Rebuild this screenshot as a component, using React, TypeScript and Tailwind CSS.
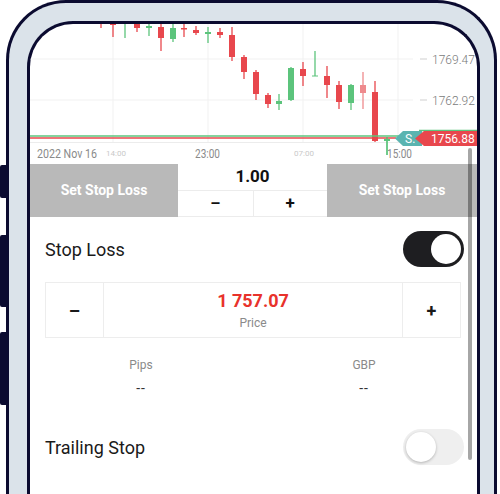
const RED = "#e8474d"
const GREEN = "#5cc47c"
const LIGHT_RED = "#ee8a8d"

// [x, bodyTop, bodyBottom, wickTop, wickBottom, colour] in page pixels
type Candle = [number, number, number, number, number, string]

const candles: Candle[] = [
  [101, 22, 24, 22, 28, RED],
  [113, 22, 25, 22, 37, RED],
  [125, 22, 24, 22, 38, GREEN],
  [137, 22, 28, 22, 32, RED],
  [149, 26, 28, 24, 36, GREEN],
  [161, 27, 38, 24, 51, RED],
  [173, 28, 39, 24, 42, GREEN],
  [184, 28, 29.5, 24, 37, RED],
  [196, 30, 33, 26, 35, RED],
  [208, 32, 34, 27, 43, GREEN],
  [220, 32, 35, 28, 38, RED],
  [232, 35, 57, 27, 61, RED],
  [244, 57, 72, 55, 79, RED],
  [256, 72, 94, 70, 100, RED],
  [268, 95, 104, 93, 108, RED],
  [279, 101, 104, 94, 110, GREEN],
  [291, 68, 100, 67, 101, GREEN],
  [303, 69, 76, 62, 86, RED],
  [315, 75.5, 76.5, 51, 76, GREEN],
  [327, 76, 85, 66, 98, RED],
  [339, 85, 102, 81, 109, RED],
  [351, 85, 103, 84, 110, GREEN],
  [363, 85, 93, 72, 109, LIGHT_RED],
  [375, 92, 141, 81, 142, RED],
  [387, 139, 141, 137, 155, GREEN],
]

function Chart() {
  const ox = 30
  const oy = 24
  return (
    <svg width="447" height="140" className="block" fontFamily="Roboto, sans-serif">
      {[113, 208, 303, 398].map((x) => (
        <line key={x} x1={x - ox} y1="0" x2={x - ox} y2="118" stroke="#f1f1f1" strokeWidth="1" />
      ))}
      {[
        [59, "1769.47"],
        [100, "1762.92"],
      ].map(([y, label]) => (
        <g key={label as string}>
          <line x1="0" y1={(y as number) - oy} x2="383" y2={(y as number) - oy} stroke="#f1f1f1" strokeWidth="1" />
          <line x1="390" y1={(y as number) - oy} x2="397" y2={(y as number) - oy} stroke="#cfcfcf" strokeWidth="1" />
          <text x="402" y={(y as number) - oy + 4.5} fontSize="12" fill="#7a7a7a" fontWeight="300">
            {label}
          </text>
        </g>
      ))}
      <line x1="0" y1="118.5" x2="447" y2="118.5" stroke="#ececec" strokeWidth="1" />

      {candles.map(([x, bt, bb, wt, wb, c]) => (
        <g key={x}>
          <line x1={x - ox} y1={wt - oy} x2={x - ox} y2={wb - oy} stroke={c} strokeWidth="1.3" />
          <rect x={x - ox - 3} y={bt - oy} width="6" height={Math.max(bb - bt, 1)} fill={c} />
        </g>
      ))}

      <line x1="0" y1="112" x2="385" y2="112" stroke={GREEN} strokeWidth="1.6" />
      <line x1="0" y1="114" x2="366" y2="114" stroke={RED} strokeWidth="1.3" />
      <line x1="389" y1="106.5" x2="447" y2="106.5" stroke={GREEN} strokeWidth="1.6" />

      <polygon points="365,114.5 373,107 392,107 392,122 373,122" fill="#5ab4b0" />
      <text x="375" y="119" fontSize="12" fill="#ffffff">
        S.
      </text>
      <polygon points="385,114.5 394,107 447,107 447,122 394,122" fill={RED} />
      <text x="401" y="119" fontSize="12" fill="#ffffff">
        1756.88
      </text>

      <text x="7" y="133.5" fontSize="12.5" fill="#8a8a8a" textLength="60" lengthAdjust="spacingAndGlyphs">
        2022 Nov 16
      </text>
      <text x="76" y="132" fontSize="8" fill="#c9c9c9">
        14:00
      </text>
      <text x="165" y="133.5" fontSize="12.5" fill="#8a8a8a" textLength="25" lengthAdjust="spacingAndGlyphs">
        23:00
      </text>
      <text x="264" y="132" fontSize="8" fill="#c9c9c9">
        07:00
      </text>
      <text x="357" y="133.5" fontSize="12.5" fill="#8a8a8a" textLength="25" lengthAdjust="spacingAndGlyphs">
        15:00
      </text>
      <line x1="357" y1="113" x2="357" y2="131" stroke={GREEN} strokeWidth="1.3" />
    </svg>
  )
}

function Toggle({ on }: { on: boolean }) {
  return (
    <div
      className={`flex h-[36px] w-[61px] items-center rounded-full p-[3px] ${
        on ? "justify-end bg-[#1e1e21]" : "justify-start bg-[#efefef]"
      }`}
    >
      <div
        className={`h-[30px] w-[30px] rounded-full bg-white ${on ? "" : "shadow-[0_1px_3px_rgba(0,0,0,0.25)]"}`}
      />
    </div>
  )
}

export default function App() {
  return (
    <div className="relative h-[494px] w-[500px] overflow-hidden bg-white font-[Roboto,sans-serif]">
      <div className="absolute left-0 top-[165px] h-[33px] w-[8px] rounded-l-[2px] bg-[#0b0b30]" />
      <div className="absolute left-0 top-[235px] h-[72px] w-[8px] rounded-l-[2px] bg-[#0b0b30]" />
      <div className="absolute left-0 top-[332px] h-[73px] w-[8px] rounded-l-[2px] bg-[#0b0b30]" />

      <div className="ml-[6px] h-[540px] w-[491px] rounded-t-[60px] border-[3px] border-b-0 border-[#0b0b30] bg-[#dbe3ea] pl-[18px] pr-[14px] pt-[18px]">
        <div className="relative h-full overflow-hidden rounded-t-[46px] border-[3px] border-b-0 border-[#0b0b30] bg-white">
          <Chart />

          <div className="grid h-[53px] grid-cols-[148px_149px_150px] border-b border-[#ececec]">
            <div className="flex items-center justify-center bg-[#b9b9b9] text-[14px] font-bold text-white">
              Set Stop Loss
            </div>
            <div className="flex flex-col">
              <div className="flex h-[27px] items-center justify-center border-b border-[#ececec] text-[17px] font-bold text-[#111]">
                1.00
              </div>
              <div className="grid flex-1 grid-cols-2">
                <div className="flex items-center justify-center text-[16px] font-bold text-[#111]">–</div>
                <div className="flex items-center justify-center border-l border-[#ececec] text-[17px] font-bold text-[#111]">
                  +
                </div>
              </div>
            </div>
            <div className="flex items-center justify-center bg-[#b9b9b9] text-[14px] font-bold text-white">
              Set Stop Loss
            </div>
          </div>

          <div className="pl-[15px] pr-[16px]">
            <div className="mt-[14px] flex h-[36px] items-center justify-between">
              <span className="text-[18px] text-[#1a1a1a]">Stop Loss</span>
              <div className="-mr-[3px]">
                <Toggle on />
              </div>
            </div>

            <div className="mt-[15px] flex h-[56px] border border-[#ededed]">
              <div className="flex w-[58px] items-center justify-center border-r border-[#ededed] text-[18px] font-bold text-[#1a1a1a]">
                –
              </div>
              <div className="flex flex-1 flex-col items-center justify-center">
                <span className="text-[18px] font-bold leading-[22px] text-[#e8322b]">1 757.07</span>
                <span className="mt-[4px] text-[12px] leading-[14px] text-[#8a8a8a]">Price</span>
              </div>
              <div className="flex w-[58px] items-center justify-center border-l border-[#ededed] text-[18px] font-bold text-[#1a1a1a]">
                +
              </div>
            </div>

            <div className="mt-[19px] grid grid-cols-[192px_192px] gap-x-[31px] text-center">
              <span className="text-[12px] leading-[16px] text-[#8a8a8a]">Pips</span>
              <span className="text-[12px] leading-[16px] text-[#8a8a8a]">GBP</span>
              <span className="mt-[7px] text-[14px] leading-[16px] tracking-[1px] text-[#333] [font-variant-ligatures:none]">
                --
              </span>
              <span className="mt-[7px] text-[14px] leading-[16px] tracking-[1px] text-[#333] [font-variant-ligatures:none]">
                --
              </span>
            </div>

            <div className="mt-[33px] flex h-[36px] items-center justify-between">
              <span className="text-[18px] text-[#1a1a1a]">Trailing Stop</span>
              <div className="-mr-[3px]">
                <Toggle on={false} />
              </div>
            </div>
          </div>

          <div className="absolute left-[438px] top-[124px] h-[312px] w-[4px] rounded-full bg-black/35" />
        </div>
      </div>
    </div>
  )
}
